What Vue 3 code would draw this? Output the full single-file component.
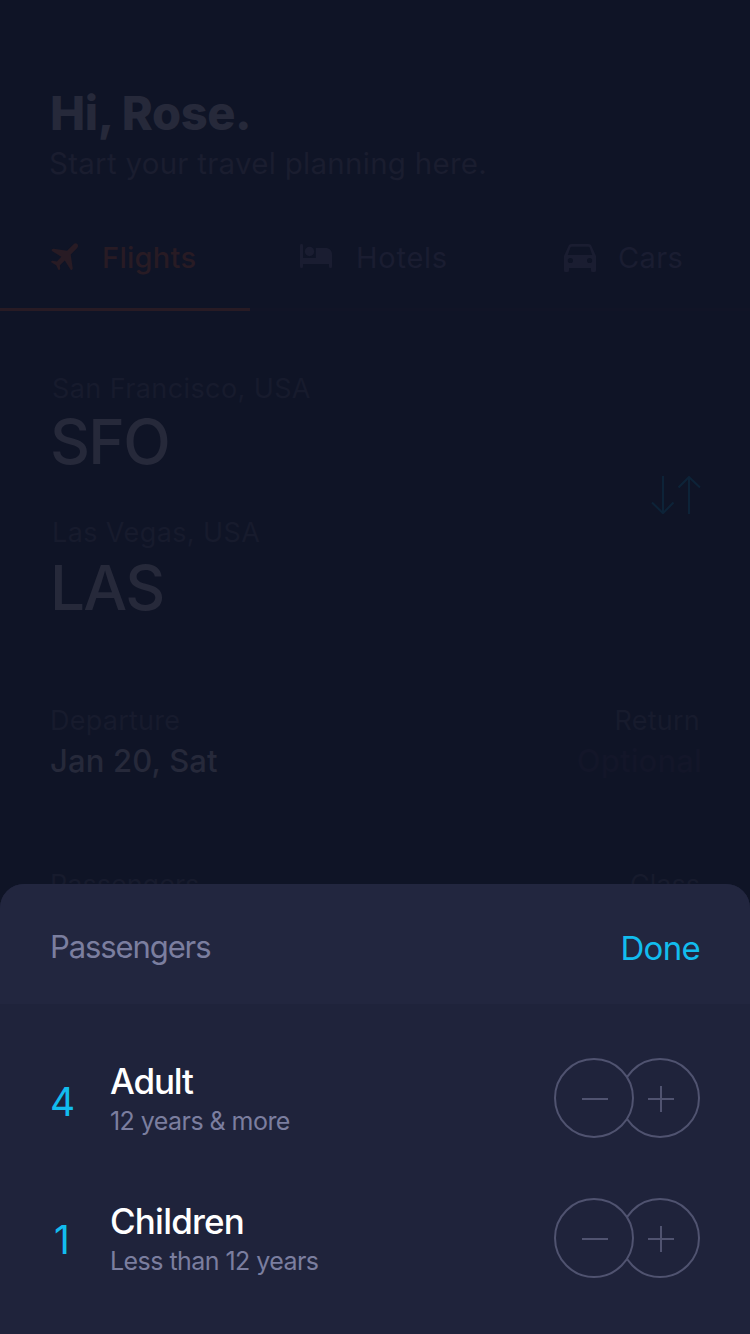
<script setup>
const routes = [
  { key: 'from', city: 'San Francisco, USA', code: 'SFO' },
  { key: 'to', city: 'Las Vegas, USA', code: 'LAS' },
]
const passengers = [
  { key: 'adult', count: 4, title: 'Adult', note: '12 years & more' },
  { key: 'children', count: 1, title: 'Children', note: 'Less than 12 years' },
]
</script>

<template>
  <div class="screen">
    <main class="page">
      <header class="hero">
        <h1><span>Hi, Rose.</span></h1>
        <p><span>Start your travel planning here.</span></p>
      </header>

      <nav class="tabs">
        <div class="tab flights">
          <svg width="28" height="28" viewBox="0 0 28 28">
            <path d="M26.300 .9C25.300 0 23.800.1 22.600 1.300L16.100 7.700 2.800 5.700C2 5.600 1.400 5.800 1 6.300C.4 7.100.6 7.900 1.300 8.300L10.300 13.700 5.900 18.600 1.600 17.700C1 17.600.4 17.900.2 18.400C0 18.900.2 19.300.6 19.600L5.200 22.200 7.200 26.400C7.500 27 8.100 27.200 8.600 26.800C9 26.500 9.200 26.100 9.200 25.600L8.900 22.200 13.800 17.500 19.300 26.300C19.700 27 20.400 27.100 21 26.700C21.500 26.300 21.800 25.700 21.700 25L19.700 11.500 26 5.200C27.300 3.900 27.400 2 26.300.9Z" />
          </svg>
          <span>Flights</span>
        </div>
        <div class="tab hotels">
          <svg width="32" height="24" viewBox="0 0 32 24">
            <path d="M0 1.200Q0 0 1.200 0H1.800Q3 0 3 1.200V14H15.800V4H25.500C29.500 4 32 6.500 32 10.300V22.800Q32 24 30.800 24H30.200Q29 24 29 22.800V20H3V22.800Q3 24 1.800 24H1.200Q0 24 0 22.800Z" />
            <circle cx="9.500" cy="7.500" r="4.700" />
          </svg>
          <span>Hotels</span>
        </div>
        <div class="tab cars">
          <svg width="32" height="28" viewBox="0 0 32 28">
            <path fill-rule="evenodd" d="M7.500 0H24.500C26.200 0 27.100.8 27.600 2.200L32 12V26.500Q32 28 30.500 28H28.500Q27 28 27 26.500V24H5V26.500Q5 28 3.500 28H1.500Q0 28 0 26.500V12L4.400 2.200C4.900.8 5.800 0 7.500 0ZM7.600 2.800Q6.700 2.800 6.400 3.600L3.800 11H28.200L25.600 3.600Q25.300 2.800 24.400 2.800ZM6.400 13.900A2.600 2.600 0 1 0 6.400 19.100 2.600 2.600 0 1 0 6.400 13.900ZM25.600 13.900A2.600 2.600 0 1 0 25.600 19.100 2.600 2.600 0 1 0 25.600 13.900Z" />
          </svg>
          <span>Cars</span>
        </div>
      </nav>

      <section class="trip">
        <div class="stops">
          <div v-for="r in routes" :key="r.key" class="stop" :class="r.key">
            <div class="city"><span>{{ r.city }}</span></div>
            <div class="code"><span>{{ r.code }}</span></div>
          </div>
        </div>
        <svg class="swap" width="50" height="38" viewBox="0 0 50 38">
          <path d="M12 0V37M1 26.500L12 37.200 22.500 26.500M38 38V1M27.500 11.500L38 1 49 11.500" />
        </svg>
      </section>

      <section class="dates">
        <div>
          <div class="label departure"><span>Departure</span></div>
          <div class="value"><span>Jan 20, Sat</span></div>
        </div>
        <div class="end">
          <div class="label return"><span>Return</span></div>
          <div class="value optional"><span>Optional</span></div>
        </div>
      </section>

      <section class="extras">
        <div class="label pax"><span>Passengers</span></div>
        <div class="label pax"><span>Class</span></div>
      </section>
    </main>

    <section class="sheet">
      <header class="sheet-head">
        <h2><span>Passengers</span></h2>
        <button class="done"><span>Done</span></button>
      </header>
      <div class="rows">
        <div v-for="p in passengers" :key="p.key" class="row" :class="p.key">
          <div class="count">{{ p.count }}</div>
          <div class="info">
            <div class="title"><span>{{ p.title }}</span></div>
            <div class="note"><span>{{ p.note }}</span></div>
          </div>
          <svg class="stepper" width="146" height="80" viewBox="0 0 146 80">
            <circle cx="106" cy="40" r="39" />
            <circle cx="40" cy="40" r="39" />
            <path d="M28 41H54M94 41H120M107 28V54" />
          </svg>
        </div>
      </div>
    </section>
  </div>
</template>

<style>
body {
  background: #0f1426;
}
</style>

<style scoped>
.screen {
  position: relative;
  width: 750px;
  height: 1334px;
  overflow: hidden;
  background: #0f1426;
  font-family: Inter, "Liberation Sans", sans-serif;
  white-space: nowrap;
}
svg {
  display: block;
  flex: none;
}
h1,
h2,
p {
  margin: 0;
  font-weight: 400;
}

.hero {
  padding: 85px 50px 0 49px;
}
.hero h1 {
  margin-left: 1px;
  font-size: 47px;
  line-height: 56px;
  font-weight: 800;
  letter-spacing: -0.4px;
  color: #26293a;
}
.hero p {
  margin-top: 2px;
  font-size: 29.5px;
  line-height: 41px;
  letter-spacing: 0.27px;
  color: #1a1d2f;
}

.tabs {
  display: grid;
  grid-template-columns: repeat(3, 250px);
  height: 73px;
  margin-top: 54px;
  color: #1a1d31;
}
.tab {
  display: flex;
  align-items: flex-start;
  box-sizing: border-box;
  border-bottom: 3px solid #111426;
  font-size: 29px;
  line-height: 40px;
  letter-spacing: 0.4px;
}
.tab svg {
  fill: currentColor;
}
.flights {
  padding-left: 51px;
  color: #281b24;
  border-color: #281b24;
}
.flights svg {
  margin-top: 5px;
}
.flights span {
  margin-left: 23px;
  font-weight: 500;
  letter-spacing: 0.3px;
}
.hotels {
  padding-left: 50px;
}
.hotels svg {
  margin-top: 6px;
}
.hotels span {
  margin-left: 24px;
  letter-spacing: 0.75px;
}
.cars {
  padding-left: 64px;
}
.cars svg {
  margin-top: 6px;
}
.cars span {
  margin-left: 22px;
}

.trip {
  display: flex;
  justify-content: space-between;
  padding: 58px 49px 0 50px;
}
.city {
  padding-left: 2px;
  font-size: 27px;
  line-height: 40px;
  letter-spacing: 0.4px;
  color: #171b2d;
}
.code {
  font-size: 62px;
  line-height: 66px;
  font-weight: 500;
  letter-spacing: -1.7px;
  color: #26293a;
}
.to {
  margin-top: 38px;
}
.to .code {
  margin-top: 2px;
}
.swap {
  margin-top: 107px;
  fill: none;
  stroke: #0d2338;
  stroke-width: 2;
}

.dates,
.extras {
  display: flex;
  justify-content: space-between;
  padding: 0 50px;
}
.dates {
  margin-top: 80px;
}
.end {
  text-align: right;
}
.label {
  font-size: 27px;
  line-height: 40px;
  letter-spacing: 0.25px;
  color: #171b2d;
}
.pax {
  letter-spacing: 0;
}
.value {
  margin-top: -1px;
  font-size: 31px;
  line-height: 42px;
  font-weight: 500;
  letter-spacing: 0.15px;
  color: #26293a;
}
.optional {
  margin-right: -2px;
  color: #131629;
}
.extras {
  margin-top: 83px;
}

.sheet {
  position: absolute;
  left: 0;
  right: 0;
  bottom: 0;
  height: 450px;
  border-radius: 24px 24px 0 0;
  overflow: hidden;
  background: #1f233b;
}
.sheet-head {
  display: flex;
  justify-content: space-between;
  height: 120px;
  padding: 0 50px;
  background: #22263f;
}
.sheet-head h2 {
  margin-top: 43px;
  font-size: 31px;
  line-height: 40px;
  letter-spacing: -1.1px;
  color: #7b7e9f;
}
.done {
  margin: 44px 0 0;
  padding: 0;
  border: 0;
  height: 40px;
  background: none;
  font: 400 33px/40px Inter, "Liberation Sans", sans-serif;
  letter-spacing: -0.7px;
  color: #12bcee;
}
.rows {
  padding: 54px 50px 0;
}
.row {
  display: flex;
  height: 140px;
}
.count {
  width: 24px;
  margin: 24px 36px 0 0;
  text-align: center;
  font-size: 39px;
  line-height: 40px;
  color: #12bcee;
}
.children .count {
  margin-top: 22px;
}
.info {
  flex: 1;
}
.title {
  margin-top: 3px;
  font-size: 35px;
  line-height: 40px;
  font-weight: 500;
  letter-spacing: -0.8px;
  color: #fff;
}
.adult .title {
  letter-spacing: -1.15px;
}
.note {
  margin-top: 3px;
  font-size: 25px;
  line-height: 34px;
  letter-spacing: -0.55px;
  color: #7b7e9f;
}
.stepper {
  stroke: #505370;
  stroke-width: 2;
}
.stepper circle {
  fill: #1f233b;
}
</style>
